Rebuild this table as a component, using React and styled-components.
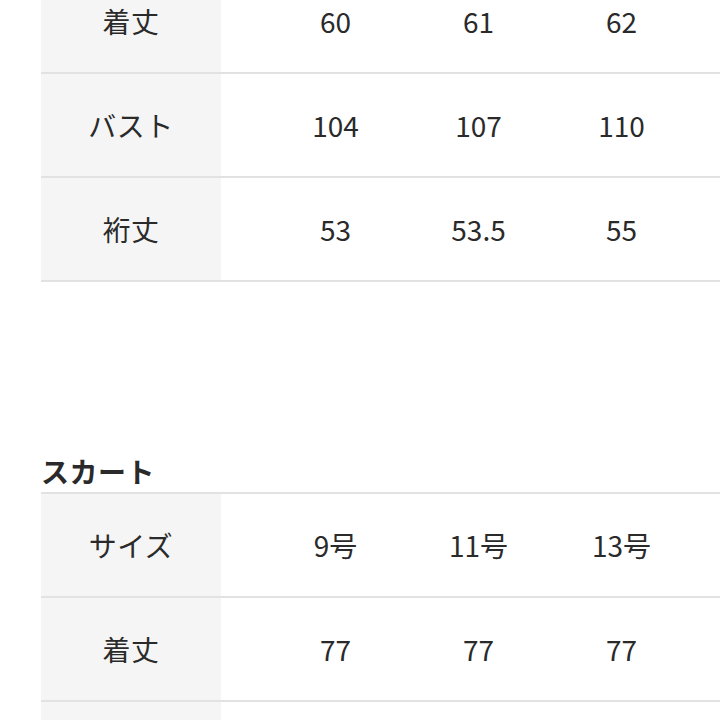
import React from 'react';
import styled, { createGlobalStyle } from 'styled-components';

const GlobalStyle = createGlobalStyle`
    html, body {
        margin: 0;
        padding: 0;
        background: #fff;
        overflow: hidden;
    }
    body {
        font-family: 'Noto Sans CJK JP', 'Noto Sans', sans-serif;
        color: #2a2a2a;
    }
`;

const Page = styled.div`
    width: 720px;
    height: 720px;
    overflow: hidden;
`;

const Content = styled.div`
    margin-top: -30px;
    padding-left: 41px;
`;

const Heading = styled.h3`
    margin: 171px 0 3px 0;
    font-size: 28px;
    line-height: 36px;
    font-weight: 700;
    letter-spacing: 0.5px;
`;

const Table = styled.div`
    display: flex;
    flex-direction: column;
    border-top: ${props => (props.$topLine ? '2px solid #e2e2e2' : 'none')};
`;

const Row = styled.div`
    display: flex;
    height: 102px;
    border-bottom: 2px solid #e2e2e2;
`;

const Label = styled.div`
    width: 180px;
    flex-shrink: 0;
    background: #f5f5f5;
    display: flex;
    align-items: center;
    justify-content: center;
    font-size: 28px;
    letter-spacing: 0.5px;
`;

const Values = styled.div`
    display: flex;
    padding-left: 43px;
    flex: 1;
`;

const Cell = styled.div`
    width: 143px;
    flex-shrink: 0;
    display: flex;
    align-items: center;
    justify-content: center;
    font-size: 28px;
`;

const jacket = [
    { label: '着丈', values: ['60', '61', '62'] },
    { label: 'バスト', values: ['104', '107', '110'] },
    { label: '裄丈', values: ['53', '53.5', '55'] },
];

// the third skirt row only begins at the bottom edge
const skirt = [
    { label: 'サイズ', values: ['9号', '11号', '13号'] },
    { label: '着丈', values: ['77', '77', '77'] },
    { label: '', values: [] },
];

const SizeTable = ({ rows, topLine }) => (
    <Table $topLine={topLine}>
        {rows.map((row, r) => (
            <Row key={r}>
                <Label>{row.label}</Label>
                <Values>
                    {row.values.map((v, i) => (
                        <Cell key={i}>{v}</Cell>
                    ))}
                </Values>
            </Row>
        ))}
    </Table>
);

const App = () => (
    <Page>
        <GlobalStyle />
        <Content>
            <SizeTable rows={jacket} />
            <Heading>スカート</Heading>
            <SizeTable rows={skirt} topLine />
        </Content>
    </Page>
);

export default App;
